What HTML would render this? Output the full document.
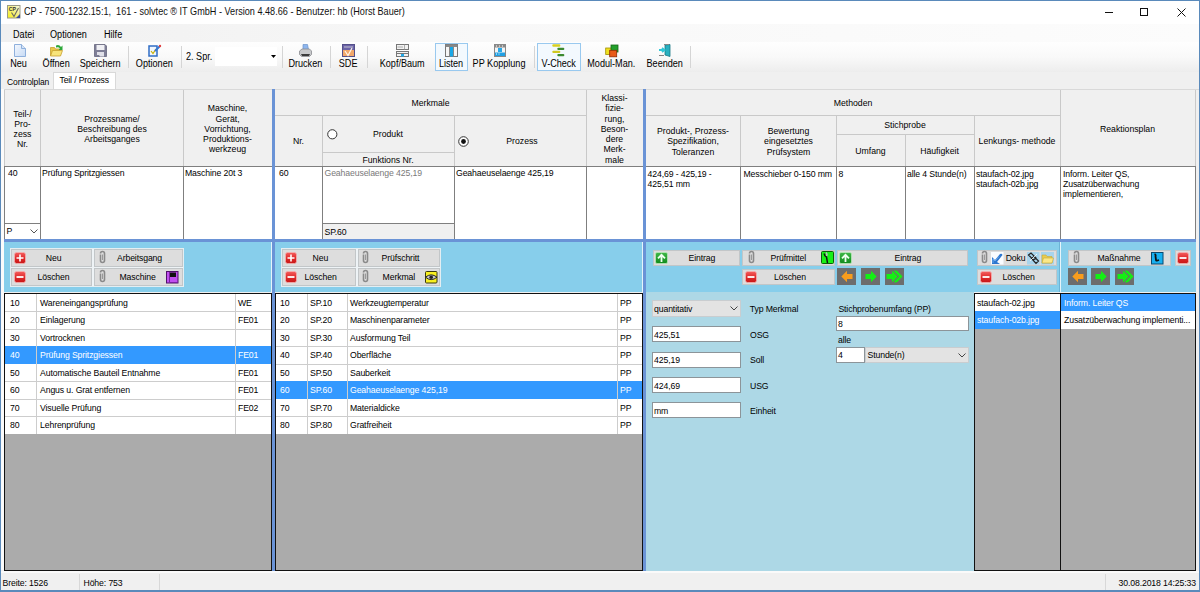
<!DOCTYPE html><html><head><meta charset="utf-8"><style>
html,body{margin:0;padding:0;width:1200px;height:592px;overflow:hidden;background:#f0f0f0}
.a{position:absolute;box-sizing:border-box}
.c{position:absolute;box-sizing:border-box;display:flex;align-items:center;justify-content:center;text-align:center;padding-top:2px;font-family:"Liberation Sans",sans-serif;white-space:nowrap}
.t{position:absolute;white-space:nowrap;letter-spacing:-0.12px;font-family:"Liberation Sans",sans-serif}
svg.a{overflow:visible}
</style></head><body>
<div class="a" style="left:0px;top:0px;width:1200px;height:592px;background:#f0f0f0"></div>
<div class="a" style="left:0px;top:0px;width:1200px;height:24px;background:#fff"></div>
<svg class="a" style="left:7px;top:5px" width="13.5" height="13.5" viewBox="0 0 13.5 13.5"><defs><linearGradient id="ai" x1="0" y1="1" x2="1" y2="0"><stop offset="0" stop-color="#f8f018"/><stop offset="0.6" stop-color="#f4f090"/><stop offset="1" stop-color="#fbfbe8"/></linearGradient></defs><rect x="0.5" y="0.5" width="12.5" height="12.5" fill="url(#ai)" stroke="#9a9a88"/><path d="M13 9 L13 13 L9 13 Z" fill="#3c4c98"/><text x="1.8" y="6.3" font-size="5.2" font-weight="bold" font-family="Liberation Sans" fill="#333">CP</text><path d="M4.5 7.5 L7 11.5 L11.5 3" stroke="#666" fill="none" stroke-width="1.1"/></svg>
<div class="t" style="left:24px;top:6.48px;font-size:10.2px;line-height:12.24px;color:#111;letter-spacing:0;transform:scaleX(0.895);transform-origin:0 50%">CP - 7500-1232.15:1,&nbsp; 161 - solvtec ® IT GmbH - Version 4.48.66 - Benutzer: hb (Horst Bauer)</div>
<div class="a" style="left:1105px;top:12px;width:8px;height:1px;background:#111"></div>
<div class="a" style="left:1140px;top:8px;width:8px;height:8px;border:1px solid #111;box-sizing:border-box"></div>
<svg class="a" style="left:1177px;top:8px" width="9" height="9" viewBox="0 0 9 9"><path d="M0.5 0.5 L8.5 8.5 M8.5 0.5 L0.5 8.5" stroke="#111" stroke-width="1"/></svg>
<div class="a" style="left:1px;top:24px;width:1198px;height:18px;background:linear-gradient(to right,#f0f0f0,#f8f8f8 40%,#fcfcfc)"></div>
<div class="t" style="left:13px;top:28.6px;font-size:10px;line-height:12.0px;color:#000;letter-spacing:0;transform:scaleX(0.91);transform-origin:0 50%">Datei</div>
<div class="t" style="left:50px;top:28.6px;font-size:10px;line-height:12.0px;color:#000;letter-spacing:0;transform:scaleX(0.91);transform-origin:0 50%">Optionen</div>
<div class="t" style="left:104px;top:28.6px;font-size:10px;line-height:12.0px;color:#000;letter-spacing:0;transform:scaleX(0.91);transform-origin:0 50%">Hilfe</div>
<div class="a" style="left:1px;top:42px;width:1198px;height:30px;background:linear-gradient(#fefefe,#f9f9f9 50%,#ededed)"></div>
<div class="a" style="left:435px;top:43px;width:33px;height:28px;border:1px solid #99c9ef;background:#f3f9fe;box-sizing:border-box"></div>
<div class="a" style="left:537px;top:43px;width:44px;height:28px;border:1px solid #99c9ef;background:#f3f9fe;box-sizing:border-box"></div>
<div class="t" style="left:-0.3000000000000007px;width:37.0px;text-align:center;top:57.74px;font-size:10.1px;line-height:12.12px;color:#000;letter-spacing:0;transform:scaleX(0.9);transform-origin:50% 50%">Neu</div>
<div class="t" style="left:31.700000000000003px;width:48.3px;text-align:center;top:57.74px;font-size:10.1px;line-height:12.12px;color:#000;letter-spacing:0;transform:scaleX(0.9);transform-origin:50% 50%">Öffnen</div>
<div class="t" style="left:69.7px;width:60.3px;text-align:center;top:57.74px;font-size:10.1px;line-height:12.12px;color:#000;letter-spacing:0;transform:scaleX(0.9);transform-origin:50% 50%">Speichern</div>
<div class="t" style="left:124.69999999999999px;width:58.60000000000002px;text-align:center;top:57.74px;font-size:10.1px;line-height:12.12px;color:#000;letter-spacing:0;transform:scaleX(0.9);transform-origin:50% 50%">Optionen</div>
<div class="t" style="left:278.3px;width:54.69999999999999px;text-align:center;top:57.74px;font-size:10.1px;line-height:12.12px;color:#000;letter-spacing:0;transform:scaleX(0.9);transform-origin:50% 50%">Drucken</div>
<div class="t" style="left:330.3px;width:36.30000000000001px;text-align:center;top:57.74px;font-size:10.1px;line-height:12.12px;color:#000;letter-spacing:0;transform:scaleX(0.9);transform-origin:50% 50%">SDE</div>
<div class="t" style="left:367.6px;width:68.39999999999998px;text-align:center;top:57.74px;font-size:10.1px;line-height:12.12px;color:#000;letter-spacing:0;transform:scaleX(0.9);transform-origin:50% 50%">Kopf/Baum</div>
<div class="t" style="left:429.2px;width:44.10000000000002px;text-align:center;top:57.74px;font-size:10.1px;line-height:12.12px;color:#000;letter-spacing:0;transform:scaleX(0.9);transform-origin:50% 50%">Listen</div>
<div class="t" style="left:462.4px;width:74.10000000000002px;text-align:center;top:57.74px;font-size:10.1px;line-height:12.12px;color:#000;letter-spacing:0;transform:scaleX(0.9);transform-origin:50% 50%">PP Kopplung</div>
<div class="t" style="left:530.7px;width:55.5px;text-align:center;top:57.74px;font-size:10.1px;line-height:12.12px;color:#000;letter-spacing:0;transform:scaleX(0.9);transform-origin:50% 50%">V-Check</div>
<div class="t" style="left:575.4px;width:72.60000000000002px;text-align:center;top:57.74px;font-size:10.1px;line-height:12.12px;color:#000;letter-spacing:0;transform:scaleX(0.9);transform-origin:50% 50%">Modul-Man.</div>
<div class="t" style="left:637.3px;width:55.5px;text-align:center;top:57.74px;font-size:10.1px;line-height:12.12px;color:#000;letter-spacing:0;transform:scaleX(0.9);transform-origin:50% 50%">Beenden</div>
<div class="a" style="left:128px;top:46px;width:1px;height:22px;background:#d5d5d5"></div>
<div class="a" style="left:181px;top:46px;width:1px;height:22px;background:#d5d5d5"></div>
<div class="a" style="left:282px;top:46px;width:1px;height:22px;background:#d5d5d5"></div>
<div class="a" style="left:330px;top:46px;width:1px;height:22px;background:#d5d5d5"></div>
<div class="a" style="left:367px;top:46px;width:1px;height:22px;background:#d5d5d5"></div>
<div class="a" style="left:534px;top:46px;width:1px;height:22px;background:#d5d5d5"></div>
<div class="a" style="left:690px;top:46px;width:1px;height:22px;background:#d5d5d5"></div>
<div class="t" style="left:185.5px;top:50.94px;font-size:10.1px;line-height:12.12px;color:#000;letter-spacing:0;transform:scaleX(0.9);transform-origin:0 50%">2. Spr.</div>
<div class="a" style="left:215px;top:47px;width:62px;height:19px;background:#fff"></div>
<svg class="a" style="left:271px;top:55px" width="5" height="4" viewBox="0 0 5 4"><path d="M0 0 L5 0 L2.5 3 Z" fill="#000"/></svg>
<svg class="a" style="left:14px;top:44px" width="12" height="13" viewBox="0 0 12 13"><defs><linearGradient id="gdoc" x1="0" y1="0" x2="1" y2="1"><stop offset="0" stop-color="#f4f8fe"/><stop offset="1" stop-color="#c6daf4"/></linearGradient></defs><path d="M0.5 0.5 H7.5 L11.5 4.5 V12.5 H0.5 Z" fill="url(#gdoc)" stroke="#8fb0dc"/><path d="M7.5 0.5 V4.5 H11.5" fill="#d6e4f6" stroke="#8fb0dc"/></svg>
<svg class="a" style="left:50px;top:44px" width="13" height="13" viewBox="0 0 13 13"><path d="M0.5 3.5 H4.5 L5.5 5 H10 V11.5 H0.5 Z" fill="#e8c848" stroke="#c8a030" stroke-width="0.8"/><path d="M2.5 6.5 H12.5 L10.5 12 H0.5 Z" fill="#f8e47a" stroke="#c8a030" stroke-width="0.8"/><path d="M6 1.5 Q9 0 11 3 L12.5 1.5 V6 H8.5 L10 4.5 Q8.5 2.5 6 3.5 Z" fill="#2ea83a"/></svg>
<svg class="a" style="left:94px;top:44px" width="13" height="13" viewBox="0 0 13 13"><path d="M0.5 0.5 H11 L12.5 2 V12.5 H0.5 Z" fill="#7e7e96" stroke="#66667e" stroke-width="0.8"/><rect x="2.5" y="1" width="8" height="5" fill="#f0f0f4"/><path d="M3 8 H10 V12.5 H6 L5 11 H3 Z" fill="#e0e0e8"/></svg>
<svg class="a" style="left:148px;top:44px" width="13" height="13" viewBox="0 0 13 13"><path d="M1 2 H9 V12 H1 Z" fill="#f0f6fe" stroke="#2f6dc6" stroke-width="1.5"/><path d="M3 7 L5 9.5 L8 5" stroke="#c8b000" stroke-width="1.2" fill="none"/><path d="M7 7 L11.5 2.5" stroke="#3a78d0" stroke-width="2"/><circle cx="12" cy="2" r="1.2" fill="#e04040"/></svg>
<svg class="a" style="left:299px;top:44px" width="13" height="13" viewBox="0 0 13 13"><path d="M4 0.5 H8.5 L9.5 5.5 H4 Z" fill="#8eb6ee" stroke="#6c94cc" stroke-width="0.7"/><path d="M0.5 7 L3 5 H10.5 L12.5 7 V10.5 L10.5 12.5 H2.5 L0.5 10.5 Z" fill="#c9cacc" stroke="#8a8c90" stroke-width="0.8"/><path d="M2 10 H11 L10 12 H3 Z" fill="#3c3c3c"/></svg>
<svg class="a" style="left:342px;top:44px" width="13" height="13" viewBox="0 0 13 13"><rect x="0.5" y="0.5" width="12" height="12" fill="#f2a86a" stroke="#54508a"/><rect x="1" y="1" width="11" height="5" fill="#6c64a8"/><path d="M2 3 H11" stroke="#ddd" stroke-width="0.8"/><path d="M3 7 L6 11.5 L10 4" stroke="#fff6e8" stroke-width="1.2" fill="none"/></svg>
<svg class="a" style="left:396px;top:44px" width="13" height="13" viewBox="0 0 13 13"><rect x="0.5" y="0.5" width="12" height="5" fill="#f2f2f2" stroke="#777"/><path d="M8.5 0.5 V5.5 M1.5 3 H7" stroke="#999" stroke-width="0.8"/><rect x="0.5" y="7.5" width="12" height="5" fill="#f2f2f2" stroke="#777"/><path d="M0.5 9.5 H12.5" stroke="#777" stroke-width="1"/><rect x="5" y="10" width="3" height="2.5" fill="#20a8e8"/></svg>
<svg class="a" style="left:445px;top:44px" width="13" height="13" viewBox="0 0 13 13"><rect x="0.5" y="0.5" width="12" height="12" fill="#f6f6f6" stroke="#777"/><rect x="0.5" y="0.5" width="12" height="2.5" fill="#888"/><path d="M4.5 0.5 V12.5 M8.5 0.5 V12.5" stroke="#888"/><rect x="5" y="3" width="3" height="9.5" fill="#18a8e8"/></svg>
<svg class="a" style="left:494px;top:44px" width="12" height="13" viewBox="0 0 12 13"><rect x="0.5" y="0.5" width="11" height="12" fill="#f4f4f4" stroke="#888"/><rect x="0.5" y="0.5" width="11" height="3" fill="#8a8a8a"/><path d="M2 2 H3 M5 2 H6 M8 2 H9" stroke="#fff"/><rect x="4" y="4" width="4" height="4" fill="#28a8e8"/><rect x="1" y="8.5" width="10" height="3.5" fill="#20a0e4"/><path d="M2 10 H3 M4.5 10 H5.5" stroke="#fff"/></svg>
<svg class="a" style="left:552px;top:44px" width="13" height="13" viewBox="0 0 13 13"><rect x="0.3" y="0.3" width="8" height="2.4" rx="1" fill="#d8d020"/><rect x="5.3" y="3.7" width="7" height="2.2" rx="1" fill="#3c8a30"/><rect x="0.3" y="6.7" width="8" height="2.2" rx="1" fill="#d0c820"/><rect x="5.3" y="10" width="7" height="2.2" rx="1" fill="#3c8a30"/></svg>
<svg class="a" style="left:605px;top:44px" width="14" height="13" viewBox="0 0 14 13"><rect x="0.7" y="4" width="6" height="6.5" fill="#f0e020" stroke="#a09000" stroke-width="0.8"/><rect x="6" y="1" width="7" height="7" fill="#22a02c" stroke="#186818" stroke-width="0.8"/><rect x="4.7" y="6.3" width="7" height="6.5" fill="#e85a18" stroke="#902800" stroke-width="0.8"/></svg>
<svg class="a" style="left:659px;top:44px" width="12" height="13" viewBox="0 0 12 13"><path d="M6 1 L11 0.5 V12.5 L6 11 Z" fill="#28b0c0" stroke="#1a7886" stroke-width="0.8"/><path d="M5 0.5 H10" stroke="#888"/><path d="M0 6 H5 M3 4 L5.5 6 L3 8" stroke="#30c8d8" stroke-width="1.8" fill="none"/><path d="M0 11.5 H5" stroke="#666" stroke-width="0.8"/></svg>
<div class="t" style="left:7px;top:76.7px;font-size:8.5px;line-height:10.2px;color:#000;">Controlplan</div>
<div class="a" style="left:53px;top:72px;width:63px;height:18px;background:#fff;border:1px solid #d9d9d9;border-bottom:none;box-sizing:border-box"></div>
<div class="t" style="left:59.5px;top:75.44px;font-size:8.6px;line-height:10.32px;color:#000;">Teil / Prozess</div>
<div class="a" style="left:1px;top:89px;width:1198px;height:1px;background:#d9d9d9"></div>
<div class="a" style="left:1px;top:89px;width:3px;height:481px;background:#fbfbfb"></div>
<div class="a" style="left:4px;top:90px;width:1192px;height:76px;background:#f0f0f0"></div>
<div class="a" style="left:4px;top:166px;width:1192px;height:73px;background:#fff"></div>
<div class="c" style="left:5px;top:90px;width:35px;height:76px;font-size:8.7px;line-height:10.2px;color:#000;">Teil-/<br>Pro-<br>zess<br>Nr.</div>
<div class="c" style="left:41px;top:90px;width:142px;height:76px;font-size:8.7px;line-height:10.2px;color:#000;">Prozessname/<br>Beschreibung des<br>Arbeitsganges</div>
<div class="c" style="left:184px;top:90px;width:87px;height:76px;font-size:8.7px;line-height:10.2px;color:#000;">Maschine,<br>Gerät,<br>Vorrichtung,<br>Produktions-<br>werkzeug</div>
<div class="a" style="left:4px;top:90px;width:1px;height:76px;background:#c9c9c9"></div>
<div class="a" style="left:4px;top:166px;width:1px;height:73px;background:#7f7f7f"></div>
<div class="a" style="left:40px;top:90px;width:1px;height:76px;background:#c9c9c9"></div>
<div class="a" style="left:40px;top:166px;width:1px;height:73px;background:#7f7f7f"></div>
<div class="a" style="left:183px;top:90px;width:1px;height:76px;background:#c9c9c9"></div>
<div class="a" style="left:183px;top:166px;width:1px;height:73px;background:#7f7f7f"></div>
<div class="a" style="left:4px;top:166px;width:268px;height:1px;background:#7f7f7f"></div>
<div class="t" style="left:8px;top:168.28px;font-size:8.7px;line-height:10.44px;color:#000;">40</div>
<div class="t" style="left:42px;top:168.28px;font-size:8.7px;line-height:10.44px;color:#000;">Prüfung Spritzgiessen</div>
<div class="t" style="left:185px;top:168.28px;font-size:8.7px;line-height:10.44px;color:#000;">Maschine 20t 3</div>
<div class="a" style="left:4px;top:223px;width:37px;height:1px;background:#7f7f7f"></div>
<div class="t" style="left:6.5px;top:225.78px;font-size:8.7px;line-height:10.44px;color:#000;">P</div>
<svg class="a" style="left:30px;top:229px" width="8" height="5" viewBox="0 0 8 5"><path d="M0.5 0.5 L4 4 L7.5 0.5" stroke="#555" fill="none"/></svg>
<div class="c" style="left:275px;top:90px;width:311px;height:25px;font-size:8.7px;line-height:10.2px;color:#000;">Merkmale</div>
<div class="a" style="left:275px;top:115px;width:311px;height:1px;background:#c9c9c9"></div>
<div class="c" style="left:275px;top:115px;width:47px;height:51px;font-size:8.7px;line-height:10.2px;color:#000;">Nr.</div>
<div class="a" style="left:322px;top:115px;width:1px;height:51px;background:#c9c9c9"></div>
<div class="c" style="left:322px;top:115px;width:132px;height:37px;font-size:8.7px;line-height:10.2px;color:#000;">Produkt</div>
<svg class="a" style="left:327px;top:129px" width="11" height="11" viewBox="0 0 11 11"><circle cx="5.3" cy="5.3" r="4.6" fill="#fff" stroke="#333" stroke-width="1"/></svg>
<div class="a" style="left:322px;top:152px;width:132px;height:1px;background:#c9c9c9"></div>
<div class="c" style="left:322px;top:152px;width:132px;height:14px;font-size:8.7px;line-height:10.2px;color:#000;">Funktions Nr.</div>
<div class="a" style="left:454px;top:115px;width:1px;height:51px;background:#c9c9c9"></div>
<svg class="a" style="left:458px;top:136px" width="12" height="12" viewBox="0 0 12 12"><circle cx="5.5" cy="5.5" r="4.8" fill="#fff" stroke="#333" stroke-width="1"/><circle cx="5.5" cy="5.5" r="2.4" fill="#111"/></svg>
<div class="c" style="left:462px;top:115px;width:120px;height:51px;font-size:8.7px;line-height:10.2px;color:#000;">Prozess</div>
<div class="a" style="left:586px;top:90px;width:1px;height:76px;background:#c9c9c9"></div>
<div class="c" style="left:586px;top:90px;width:57px;height:76px;font-size:8.7px;line-height:10.3px;color:#000;">Klassi-<br>fizie-<br>rung,<br>Beson-<br>dere<br>Merk-<br>male</div>
<div class="a" style="left:275px;top:166px;width:368px;height:1px;background:#7f7f7f"></div>
<div class="a" style="left:322px;top:166px;width:1px;height:73px;background:#7f7f7f"></div>
<div class="a" style="left:454px;top:166px;width:1px;height:73px;background:#7f7f7f"></div>
<div class="a" style="left:586px;top:166px;width:1px;height:73px;background:#7f7f7f"></div>
<div class="t" style="left:279px;top:168.28px;font-size:8.7px;line-height:10.44px;color:#000;">60</div>
<div class="t" style="left:324.5px;top:168.28px;font-size:8.7px;line-height:10.44px;color:#7a7a7a;">Geahaeuselaenge 425,19</div>
<div class="a" style="left:323px;top:224px;width:131px;height:15px;background:#f0f0f0"></div>
<div class="a" style="left:322px;top:223px;width:133px;height:1px;background:#7f7f7f"></div>
<div class="t" style="left:324.5px;top:226.78px;font-size:8.7px;line-height:10.44px;color:#000;">SP.60</div>
<div class="t" style="left:456px;top:168.28px;font-size:8.7px;line-height:10.44px;color:#000;">Geahaeuselaenge 425,19</div>
<div class="c" style="left:646px;top:90px;width:414px;height:25px;font-size:8.7px;line-height:10.2px;color:#000;">Methoden</div>
<div class="a" style="left:646px;top:115px;width:414px;height:1px;background:#c9c9c9"></div>
<div class="c" style="left:646px;top:115px;width:94px;height:51px;font-size:8.7px;line-height:10.2px;color:#000;">Produkt-, Prozess-<br>Spezifikation,<br>Toleranzen</div>
<div class="a" style="left:740px;top:115px;width:1px;height:51px;background:#c9c9c9"></div>
<div class="c" style="left:741px;top:115px;width:95px;height:51px;font-size:8.7px;line-height:10.2px;color:#000;">Bewertung<br>eingesetztes<br>Prüfsystem</div>
<div class="a" style="left:836px;top:115px;width:1px;height:51px;background:#c9c9c9"></div>
<div class="c" style="left:836px;top:115px;width:138px;height:19px;font-size:8.7px;line-height:10.2px;color:#000;">Stichprobe</div>
<div class="a" style="left:836px;top:134px;width:138px;height:1px;background:#c9c9c9"></div>
<div class="c" style="left:836px;top:134px;width:69px;height:32px;font-size:8.7px;line-height:10.2px;color:#000;">Umfang</div>
<div class="a" style="left:905px;top:134px;width:1px;height:32px;background:#c9c9c9"></div>
<div class="c" style="left:905px;top:134px;width:69px;height:32px;font-size:8.7px;line-height:10.2px;color:#000;">Häufigkeit</div>
<div class="a" style="left:974px;top:115px;width:1px;height:51px;background:#c9c9c9"></div>
<div class="c" style="left:974px;top:115px;width:86px;height:51px;font-size:8.7px;line-height:10.2px;color:#000;">Lenkungs- methode</div>
<div class="a" style="left:1060px;top:90px;width:1px;height:76px;background:#c9c9c9"></div>
<div class="c" style="left:1060px;top:90px;width:135px;height:76px;font-size:8.7px;line-height:10.2px;color:#000;">Reaktionsplan</div>
<div class="a" style="left:1195px;top:90px;width:1px;height:76px;background:#c9c9c9"></div>
<div class="a" style="left:646px;top:166px;width:550px;height:1px;background:#7f7f7f"></div>
<div class="a" style="left:740px;top:166px;width:1px;height:73px;background:#7f7f7f"></div>
<div class="a" style="left:836px;top:166px;width:1px;height:73px;background:#7f7f7f"></div>
<div class="a" style="left:905px;top:166px;width:1px;height:73px;background:#7f7f7f"></div>
<div class="a" style="left:974px;top:166px;width:1px;height:73px;background:#7f7f7f"></div>
<div class="a" style="left:1060px;top:166px;width:1px;height:73px;background:#7f7f7f"></div>
<div class="a" style="left:1195px;top:166px;width:1px;height:73px;background:#7f7f7f"></div>
<div class="t" style="left:647.5px;top:169px;font-size:8.7px;line-height:10px;color:#000;">424,69 - 425,19 -<br>425,51 mm</div>
<div class="t" style="left:743.5px;top:168.78px;font-size:8.7px;line-height:10.44px;color:#000;">Messchieber 0-150 mm</div>
<div class="t" style="left:838.5px;top:168.78px;font-size:8.7px;line-height:10.44px;color:#000;">8</div>
<div class="t" style="left:907px;top:168.78px;font-size:8.7px;line-height:10.44px;color:#000;">alle 4 Stunde(n)</div>
<div class="t" style="left:976px;top:169px;font-size:8.7px;line-height:10px;color:#000;">staufach-02.jpg<br>staufach-02b.jpg</div>
<div class="t" style="left:1063px;top:169px;font-size:8.7px;line-height:10px;color:#000;">Inform. Leiter QS,<br>Zusatzüberwachung<br>implementieren,</div>
<div class="a" style="left:4px;top:89px;width:1192px;height:1px;background:#d9d9d9"></div>
<div class="a" style="left:4px;top:242px;width:1192px;height:50px;background:#87ceeb"></div>
<div class="a" style="left:4px;top:239px;width:1192px;height:3px;background:#6a93d6"></div>
<div class="a" style="left:10px;top:248px;width:174px;height:39px;background:#eef3f6;border:1px solid #e4eef2"></div>
<div class="a" style="left:11px;top:249px;width:81px;height:18px;background:#dddddd;border:1px solid #c2c6c8;"></div>
<div class="a" style="left:11px;top:268px;width:81px;height:18px;background:#dddddd;border:1px solid #c2c6c8;"></div>
<div class="a" style="left:93.5px;top:249px;width:89.0px;height:18px;background:#dddddd;border:1px solid #c2c6c8;"></div>
<div class="a" style="left:93.5px;top:268px;width:89.0px;height:18px;background:#dddddd;border:1px solid #c2c6c8;"></div>
<svg class="a" style="left:14px;top:252px" width="12" height="12" viewBox="0 0 12 12"><defs><linearGradient id="rg" x1="0" y1="0" x2="0" y2="1"><stop offset="0" stop-color="#f46060"/><stop offset="0.5" stop-color="#e02a2a"/><stop offset="1" stop-color="#c81818"/></linearGradient></defs><rect x="0.5" y="0.5" width="11" height="11" rx="2" fill="url(#rg)" stroke="#f4b0b0" stroke-width="0.8"/><path d="M6 2.5 V9.5 M2.5 6 H9.5" stroke="#fff" stroke-width="1.6"/></svg>
<svg class="a" style="left:14px;top:271px" width="12" height="12" viewBox="0 0 12 12"><defs><linearGradient id="rg" x1="0" y1="0" x2="0" y2="1"><stop offset="0" stop-color="#f46060"/><stop offset="0.5" stop-color="#e02a2a"/><stop offset="1" stop-color="#c81818"/></linearGradient></defs><rect x="0.5" y="0.5" width="11" height="11" rx="2" fill="url(#rg)" stroke="#f4b0b0" stroke-width="0.8"/><path d="M2.5 6 H9.5" stroke="#fff" stroke-width="1.8"/></svg>
<div class="t" style="left:45.8px;top:253.08px;font-size:8.7px;line-height:10.44px;color:#000;">Neu</div>
<div class="t" style="left:37.5px;top:272.08px;font-size:8.7px;line-height:10.44px;color:#000;">Löschen</div>
<svg class="a" style="left:99px;top:251px" width="7" height="13" viewBox="0 0 7 13"><path d="M1.5 3.5 V9.5 A2 2 0 0 0 5.5 9.5 V2.5 A2 2 0 0 0 1.5 2.5" stroke="#8a8a8a" fill="none" stroke-width="1.6"/><path d="M3.5 3.5 V9" stroke="#9a9a9a" stroke-width="1"/></svg>
<svg class="a" style="left:99px;top:270px" width="7" height="13" viewBox="0 0 7 13"><path d="M1.5 3.5 V9.5 A2 2 0 0 0 5.5 9.5 V2.5 A2 2 0 0 0 1.5 2.5" stroke="#8a8a8a" fill="none" stroke-width="1.6"/><path d="M3.5 3.5 V9" stroke="#9a9a9a" stroke-width="1"/></svg>
<div class="t" style="left:117px;top:253.08px;font-size:8.7px;line-height:10.44px;color:#000;">Arbeitsgang</div>
<div class="t" style="left:119.4px;top:272.08px;font-size:8.7px;line-height:10.44px;color:#000;">Maschine</div>
<svg class="a" style="left:166px;top:270.5px" width="12.5" height="12.5" viewBox="0 0 12.5 12.5"><rect x="0.5" y="0.5" width="11.5" height="11.5" fill="#c050f0" stroke="#50106a"/><rect x="4" y="1.5" width="6" height="4.5" fill="#111"/><path d="M3.5 1 V11.5 H11.5" stroke="#7a20a0" stroke-width="1" fill="none"/></svg>
<div class="a" style="left:281px;top:248px;width:160px;height:39px;background:#eef3f6;border:1px solid #e4eef2"></div>
<div class="a" style="left:282px;top:249px;width:74px;height:18px;background:#dddddd;border:1px solid #c2c6c8;"></div>
<div class="a" style="left:282px;top:268px;width:74px;height:18px;background:#dddddd;border:1px solid #c2c6c8;"></div>
<div class="a" style="left:358px;top:249px;width:82px;height:18px;background:#dddddd;border:1px solid #c2c6c8;"></div>
<div class="a" style="left:358px;top:268px;width:82px;height:18px;background:#dddddd;border:1px solid #c2c6c8;"></div>
<svg class="a" style="left:285px;top:252px" width="12" height="12" viewBox="0 0 12 12"><defs><linearGradient id="rg" x1="0" y1="0" x2="0" y2="1"><stop offset="0" stop-color="#f46060"/><stop offset="0.5" stop-color="#e02a2a"/><stop offset="1" stop-color="#c81818"/></linearGradient></defs><rect x="0.5" y="0.5" width="11" height="11" rx="2" fill="url(#rg)" stroke="#f4b0b0" stroke-width="0.8"/><path d="M6 2.5 V9.5 M2.5 6 H9.5" stroke="#fff" stroke-width="1.6"/></svg>
<svg class="a" style="left:285px;top:271px" width="12" height="12" viewBox="0 0 12 12"><defs><linearGradient id="rg" x1="0" y1="0" x2="0" y2="1"><stop offset="0" stop-color="#f46060"/><stop offset="0.5" stop-color="#e02a2a"/><stop offset="1" stop-color="#c81818"/></linearGradient></defs><rect x="0.5" y="0.5" width="11" height="11" rx="2" fill="url(#rg)" stroke="#f4b0b0" stroke-width="0.8"/><path d="M2.5 6 H9.5" stroke="#fff" stroke-width="1.8"/></svg>
<div class="t" style="left:312.6px;top:253.08px;font-size:8.7px;line-height:10.44px;color:#000;">Neu</div>
<div class="t" style="left:304.6px;top:272.08px;font-size:8.7px;line-height:10.44px;color:#000;">Löschen</div>
<svg class="a" style="left:362px;top:251px" width="7" height="13" viewBox="0 0 7 13"><path d="M1.5 3.5 V9.5 A2 2 0 0 0 5.5 9.5 V2.5 A2 2 0 0 0 1.5 2.5" stroke="#8a8a8a" fill="none" stroke-width="1.6"/><path d="M3.5 3.5 V9" stroke="#9a9a9a" stroke-width="1"/></svg>
<svg class="a" style="left:362px;top:270px" width="7" height="13" viewBox="0 0 7 13"><path d="M1.5 3.5 V9.5 A2 2 0 0 0 5.5 9.5 V2.5 A2 2 0 0 0 1.5 2.5" stroke="#8a8a8a" fill="none" stroke-width="1.6"/><path d="M3.5 3.5 V9" stroke="#9a9a9a" stroke-width="1"/></svg>
<div class="t" style="left:381.5px;top:253.08px;font-size:8.7px;line-height:10.44px;color:#000;">Prüfschritt</div>
<div class="t" style="left:382.6px;top:272.08px;font-size:8.7px;line-height:10.44px;color:#000;">Merkmal</div>
<svg class="a" style="left:424.5px;top:270.5px" width="12.5" height="12.5" viewBox="0 0 12.5 12.5"><rect x="0.5" y="0.5" width="11.5" height="11.5" rx="1" fill="#f8f020" stroke="#3a3a10"/><path d="M0.5 6.2 Q6.2 1.5 12 6.2 Q6.2 11 0.5 6.2 Z" fill="#c8c8c8" stroke="#222" stroke-width="1"/><circle cx="6.2" cy="6.2" r="1.8" fill="#222"/></svg>
<div class="a" style="left:653px;top:250px;width:87px;height:16px;background:#dddddd;border:1px solid #c2c6c8;"></div>
<svg class="a" style="left:655px;top:252px" width="13" height="12" viewBox="0 0 13 12"><defs><linearGradient id="gg" x1="0" y1="0" x2="0" y2="1"><stop offset="0" stop-color="#40b848"/><stop offset="1" stop-color="#108a1c"/></linearGradient></defs><rect x="0.5" y="0.5" width="12" height="11" rx="1.5" fill="url(#gg)" stroke="#b8e8b8" stroke-width="0.8"/><path d="M6.5 10 V3 M3 6.3 L6.5 2.8 L10 6.3" stroke="#f0fff0" stroke-width="1.8" fill="none"/></svg>
<div class="t" style="left:688.5px;top:253.08px;font-size:8.7px;line-height:10.44px;color:#000;">Eintrag</div>
<div class="a" style="left:741.5px;top:250px;width:93.5px;height:16px;background:#dddddd;border:1px solid #c2c6c8;"></div>
<div class="a" style="left:741.5px;top:269px;width:93.5px;height:16px;background:#dddddd;border:1px solid #c2c6c8;"></div>
<svg class="a" style="left:748px;top:251px" width="7" height="13" viewBox="0 0 7 13"><path d="M1.5 3.5 V9.5 A2 2 0 0 0 5.5 9.5 V2.5 A2 2 0 0 0 1.5 2.5" stroke="#8a8a8a" fill="none" stroke-width="1.6"/><path d="M3.5 3.5 V9" stroke="#9a9a9a" stroke-width="1"/></svg>
<div class="t" style="left:770.5px;top:253.08px;font-size:8.7px;line-height:10.44px;color:#000;">Prüfmittel</div>
<svg class="a" style="left:820.5px;top:251px" width="13" height="13" viewBox="0 0 13 13"><rect x="0.5" y="0.5" width="12" height="12" rx="1" fill="#18f018" stroke="#0a600a"/><path d="M3.5 2.5 Q3 5 5.5 6 L6.5 12" stroke="#111" stroke-width="1.5" fill="none"/><path d="M5 1.5 Q6.5 3 5.5 5" stroke="#bbb" stroke-width="1.5" fill="none"/></svg>
<svg class="a" style="left:745px;top:271px" width="12" height="12" viewBox="0 0 12 12"><defs><linearGradient id="rg" x1="0" y1="0" x2="0" y2="1"><stop offset="0" stop-color="#f46060"/><stop offset="0.5" stop-color="#e02a2a"/><stop offset="1" stop-color="#c81818"/></linearGradient></defs><rect x="0.5" y="0.5" width="11" height="11" rx="2" fill="url(#rg)" stroke="#f4b0b0" stroke-width="0.8"/><path d="M2.5 6 H9.5" stroke="#fff" stroke-width="1.8"/></svg>
<div class="t" style="left:774px;top:272.08px;font-size:8.7px;line-height:10.44px;color:#000;">Löschen</div>
<div class="a" style="left:837px;top:250px;width:131px;height:16px;background:#dddddd;border:1px solid #c2c6c8;"></div>
<svg class="a" style="left:839px;top:252px" width="13" height="12" viewBox="0 0 13 12"><defs><linearGradient id="gg" x1="0" y1="0" x2="0" y2="1"><stop offset="0" stop-color="#40b848"/><stop offset="1" stop-color="#108a1c"/></linearGradient></defs><rect x="0.5" y="0.5" width="12" height="11" rx="1.5" fill="url(#gg)" stroke="#b8e8b8" stroke-width="0.8"/><path d="M6.5 10 V3 M3 6.3 L6.5 2.8 L10 6.3" stroke="#f0fff0" stroke-width="1.8" fill="none"/></svg>
<div class="t" style="left:894.5px;top:253.08px;font-size:8.7px;line-height:10.44px;color:#000;">Eintrag</div>
<div class="a" style="left:837px;top:268px;width:19px;height:17px;background:#6d6d6d"></div>
<svg class="a" style="left:841px;top:269.5px" width="12" height="13" viewBox="0 0 12 13"><path d="M0.3 6.5 L6 0.8 V4 H11.5 V9 H6 V12.2 Z" fill="#f99d1c"/></svg>
<div class="a" style="left:861px;top:268px;width:19px;height:17px;background:#6d6d6d"></div>
<svg class="a" style="left:864.5px;top:269.5px" width="12" height="13" viewBox="0 0 12 13"><path d="M11.7 6.5 L6 0.8 V4 H0.5 V9 H6 V12.2 Z" fill="#14f014"/></svg>
<div class="a" style="left:884.5px;top:268px;width:19px;height:17px;background:#6d6d6d"></div>
<svg class="a" style="left:886.0px;top:269.5px" width="16" height="13" viewBox="0 0 16 13"><path d="M11.7 6.5 L6 0.8 V4 H0.5 V9 H6 V12.2 Z" fill="#14f014"/><path d="M9 0.8 L15 6.5 L9 12.2 H11 L16.5 6.5 L11 0.8 Z" fill="#14f014"/><path d="M8.5 0.8 L14.3 6.5 L8.5 12.2" stroke="#14f014" stroke-width="1.6" fill="none"/></svg>
<div class="a" style="left:976.5px;top:250px;width:80.0px;height:16px;background:#dddddd;border:1px solid #c2c6c8;"></div>
<div class="a" style="left:976.5px;top:269px;width:80.0px;height:16px;background:#dddddd;border:1px solid #c2c6c8;"></div>
<svg class="a" style="left:981px;top:251px" width="7" height="13" viewBox="0 0 7 13"><path d="M1.5 3.5 V9.5 A2 2 0 0 0 5.5 9.5 V2.5 A2 2 0 0 0 1.5 2.5" stroke="#8a8a8a" fill="none" stroke-width="1.6"/><path d="M3.5 3.5 V9" stroke="#9a9a9a" stroke-width="1"/></svg>
<svg class="a" style="left:990.5px;top:251.5px" width="12.5" height="12.5" viewBox="0 0 12.5 12.5"><rect x="0" y="0" width="12.5" height="12.5" fill="#fafcff"/><path d="M1 12 L1 5 L4 8 L9 2 Q11 1 11.5 3 L6 10 L9 12 Z" fill="#2e78d0"/><path d="M2 11 L2 7 L4 9 L8 4.5" stroke="#7ab4f0" stroke-width="0.8" fill="none"/></svg>
<div class="t" style="left:1005.7px;top:253.08px;font-size:8.7px;line-height:10.44px;color:#000;">Doku</div>
<svg class="a" style="left:1027px;top:251.5px" width="12.5" height="12.5" viewBox="0 0 12.5 12.5"><rect x="0" y="0" width="12.5" height="12.5" fill="#a8d4ec"/><path d="M1.5 3 L4 1 L9 6 L6.5 8 Z M4.5 6.5 L7 4.5 L11.5 9 L9 11.5 Z" fill="none" stroke="#222" stroke-width="1.2"/><path d="M3 9 L10 2" stroke="#fff" stroke-width="0.8"/></svg>
<svg class="a" style="left:1041px;top:251.5px" width="13" height="12.5" viewBox="0 0 13 12.5"><rect x="0" y="0" width="13" height="12.5" fill="#a8d4ec"/><path d="M1 3 H5 L6 4.5 H11 V11 H1 Z" fill="#e8cc50" stroke="#c8a838" stroke-width="0.6"/><path d="M2.5 6 H12.5 L11 11 H1 Z" fill="#fbe888" stroke="#c8a838" stroke-width="0.6"/></svg>
<svg class="a" style="left:980px;top:271px" width="12" height="12" viewBox="0 0 12 12"><defs><linearGradient id="rg" x1="0" y1="0" x2="0" y2="1"><stop offset="0" stop-color="#f46060"/><stop offset="0.5" stop-color="#e02a2a"/><stop offset="1" stop-color="#c81818"/></linearGradient></defs><rect x="0.5" y="0.5" width="11" height="11" rx="2" fill="url(#rg)" stroke="#f4b0b0" stroke-width="0.8"/><path d="M2.5 6 H9.5" stroke="#fff" stroke-width="1.8"/></svg>
<div class="t" style="left:1002.6px;top:272.08px;font-size:8.7px;line-height:10.44px;color:#000;">Löschen</div>
<div class="a" style="left:1059px;top:242px;width:1px;height:50px;background:#6cb4d6"></div>
<div class="a" style="left:271px;top:242px;width:1px;height:50px;background:#e6f4fa"></div>
<div class="a" style="left:642px;top:242px;width:1px;height:50px;background:#e6f4fa"></div>
<div class="a" style="left:1060px;top:242px;width:1px;height:50px;background:#e6f4fa"></div>
<div class="a" style="left:1068px;top:250px;width:102.5px;height:16px;background:#dddddd;border:1px solid #c2c6c8;"></div>
<svg class="a" style="left:1073px;top:251px" width="7" height="13" viewBox="0 0 7 13"><path d="M1.5 3.5 V9.5 A2 2 0 0 0 5.5 9.5 V2.5 A2 2 0 0 0 1.5 2.5" stroke="#8a8a8a" fill="none" stroke-width="1.6"/><path d="M3.5 3.5 V9" stroke="#9a9a9a" stroke-width="1"/></svg>
<div class="t" style="left:1097.5px;top:253.08px;font-size:8.7px;line-height:10.44px;color:#000;">Maßnahme</div>
<svg class="a" style="left:1151px;top:251.5px" width="12.5" height="12.5" viewBox="0 0 12.5 12.5"><rect x="0.5" y="0.5" width="11.5" height="11.5" fill="#18b0f0" stroke="#0a4a70"/><path d="M3.5 2 Q5 2.5 4.5 4 L5 8 Q5 9 6.5 8.5 L8 8" stroke="#111" stroke-width="1.8" fill="none"/></svg>
<div class="a" style="left:1174.5px;top:250px;width:16.0px;height:16px;background:#dddddd;border:1px solid #c2c6c8;"></div>
<svg class="a" style="left:1176.5px;top:251.8px" width="12" height="12" viewBox="0 0 12 12"><defs><linearGradient id="rg" x1="0" y1="0" x2="0" y2="1"><stop offset="0" stop-color="#f46060"/><stop offset="0.5" stop-color="#e02a2a"/><stop offset="1" stop-color="#c81818"/></linearGradient></defs><rect x="0.5" y="0.5" width="11" height="11" rx="2" fill="url(#rg)" stroke="#f4b0b0" stroke-width="0.8"/><path d="M2.5 6 H9.5" stroke="#fff" stroke-width="1.8"/></svg>
<div class="a" style="left:1067.5px;top:268px;width:19px;height:17px;background:#6d6d6d"></div>
<svg class="a" style="left:1071.5px;top:269.5px" width="12" height="13" viewBox="0 0 12 13"><path d="M0.3 6.5 L6 0.8 V4 H11.5 V9 H6 V12.2 Z" fill="#f99d1c"/></svg>
<div class="a" style="left:1091px;top:268px;width:19px;height:17px;background:#6d6d6d"></div>
<svg class="a" style="left:1094.5px;top:269.5px" width="12" height="13" viewBox="0 0 12 13"><path d="M11.7 6.5 L6 0.8 V4 H0.5 V9 H6 V12.2 Z" fill="#14f014"/></svg>
<div class="a" style="left:1115px;top:268px;width:19px;height:17px;background:#6d6d6d"></div>
<svg class="a" style="left:1116.5px;top:269.5px" width="16" height="13" viewBox="0 0 16 13"><path d="M11.7 6.5 L6 0.8 V4 H0.5 V9 H6 V12.2 Z" fill="#14f014"/><path d="M9 0.8 L15 6.5 L9 12.2 H11 L16.5 6.5 L11 0.8 Z" fill="#14f014"/><path d="M8.5 0.8 L14.3 6.5 L8.5 12.2" stroke="#14f014" stroke-width="1.6" fill="none"/></svg>
<div class="a" style="left:4px;top:293px;width:268px;height:278px;background:#ababab;border:1px solid #111"></div>
<div class="a" style="left:5px;top:294px;width:266px;height:17px;background:#fff"></div>
<div class="t" style="left:10px;top:297.58px;font-size:8.7px;line-height:10.44px;color:#000;">10</div>
<div class="t" style="left:40px;top:297.58px;font-size:8.7px;line-height:10.44px;color:#000;">Wareneingangsprüfung</div>
<div class="t" style="left:238px;top:297.58px;font-size:8.7px;line-height:10.44px;color:#000;">WE</div>
<div class="a" style="left:5px;top:311px;width:266px;height:18px;background:#fff"></div>
<div class="t" style="left:10px;top:315.08px;font-size:8.7px;line-height:10.44px;color:#000;">20</div>
<div class="t" style="left:40px;top:315.08px;font-size:8.7px;line-height:10.44px;color:#000;">Einlagerung</div>
<div class="t" style="left:238px;top:315.08px;font-size:8.7px;line-height:10.44px;color:#000;">FE01</div>
<div class="a" style="left:5px;top:329px;width:266px;height:17px;background:#fff"></div>
<div class="t" style="left:10px;top:332.58px;font-size:8.7px;line-height:10.44px;color:#000;">30</div>
<div class="t" style="left:40px;top:332.58px;font-size:8.7px;line-height:10.44px;color:#000;">Vortrocknen</div>
<div class="t" style="left:238px;top:332.58px;font-size:8.7px;line-height:10.44px;color:#000;"></div>
<div class="a" style="left:5px;top:346px;width:266px;height:18px;background:#3399ff"></div>
<div class="t" style="left:10px;top:350.08px;font-size:8.7px;line-height:10.44px;color:#fff;">40</div>
<div class="t" style="left:40px;top:350.08px;font-size:8.7px;line-height:10.44px;color:#fff;">Prüfung Spritzgiessen</div>
<div class="t" style="left:238px;top:350.08px;font-size:8.7px;line-height:10.44px;color:#fff;">FE01</div>
<div class="a" style="left:5px;top:364px;width:266px;height:17px;background:#fff"></div>
<div class="t" style="left:10px;top:367.58px;font-size:8.7px;line-height:10.44px;color:#000;">50</div>
<div class="t" style="left:40px;top:367.58px;font-size:8.7px;line-height:10.44px;color:#000;">Automatische Bauteil Entnahme</div>
<div class="t" style="left:238px;top:367.58px;font-size:8.7px;line-height:10.44px;color:#000;">FE01</div>
<div class="a" style="left:5px;top:381px;width:266px;height:18px;background:#fff"></div>
<div class="t" style="left:10px;top:385.08px;font-size:8.7px;line-height:10.44px;color:#000;">60</div>
<div class="t" style="left:40px;top:385.08px;font-size:8.7px;line-height:10.44px;color:#000;">Angus u. Grat entfernen</div>
<div class="t" style="left:238px;top:385.08px;font-size:8.7px;line-height:10.44px;color:#000;">FE01</div>
<div class="a" style="left:5px;top:399px;width:266px;height:17px;background:#fff"></div>
<div class="t" style="left:10px;top:402.58px;font-size:8.7px;line-height:10.44px;color:#000;">70</div>
<div class="t" style="left:40px;top:402.58px;font-size:8.7px;line-height:10.44px;color:#000;">Visuelle Prüfung</div>
<div class="t" style="left:238px;top:402.58px;font-size:8.7px;line-height:10.44px;color:#000;">FE02</div>
<div class="a" style="left:5px;top:416px;width:266px;height:18px;background:#fff"></div>
<div class="t" style="left:10px;top:420.08px;font-size:8.7px;line-height:10.44px;color:#000;">80</div>
<div class="t" style="left:40px;top:420.08px;font-size:8.7px;line-height:10.44px;color:#000;">Lehrenprüfung</div>
<div class="t" style="left:238px;top:420.08px;font-size:8.7px;line-height:10.44px;color:#000;"></div>
<div class="a" style="left:5px;top:311px;width:266px;height:1px;background:#cdcdcd"></div>
<div class="a" style="left:5px;top:329px;width:266px;height:1px;background:#cdcdcd"></div>
<div class="a" style="left:5px;top:381px;width:266px;height:1px;background:#cdcdcd"></div>
<div class="a" style="left:5px;top:399px;width:266px;height:1px;background:#cdcdcd"></div>
<div class="a" style="left:5px;top:416px;width:266px;height:1px;background:#cdcdcd"></div>
<div class="a" style="left:36px;top:294px;width:1px;height:140px;background:#cdcdcd"></div>
<div class="a" style="left:235px;top:294px;width:1px;height:140px;background:#cdcdcd"></div>
<div class="a" style="left:275px;top:293px;width:368px;height:278px;background:#ababab;border:1px solid #111"></div>
<div class="a" style="left:276px;top:294px;width:366px;height:17px;background:#fff"></div>
<div class="t" style="left:280px;top:297.58px;font-size:8.7px;line-height:10.44px;color:#000;">10</div>
<div class="t" style="left:310px;top:297.58px;font-size:8.7px;line-height:10.44px;color:#000;">SP.10</div>
<div class="t" style="left:350px;top:297.58px;font-size:8.7px;line-height:10.44px;color:#000;">Werkzeugtemperatur</div>
<div class="t" style="left:620px;top:297.58px;font-size:8.7px;line-height:10.44px;color:#000;">PP</div>
<div class="a" style="left:276px;top:311px;width:366px;height:18px;background:#fff"></div>
<div class="t" style="left:280px;top:315.08px;font-size:8.7px;line-height:10.44px;color:#000;">20</div>
<div class="t" style="left:310px;top:315.08px;font-size:8.7px;line-height:10.44px;color:#000;">SP.20</div>
<div class="t" style="left:350px;top:315.08px;font-size:8.7px;line-height:10.44px;color:#000;">Maschinenparameter</div>
<div class="t" style="left:620px;top:315.08px;font-size:8.7px;line-height:10.44px;color:#000;">PP</div>
<div class="a" style="left:276px;top:329px;width:366px;height:17px;background:#fff"></div>
<div class="t" style="left:280px;top:332.58px;font-size:8.7px;line-height:10.44px;color:#000;">30</div>
<div class="t" style="left:310px;top:332.58px;font-size:8.7px;line-height:10.44px;color:#000;">SP.30</div>
<div class="t" style="left:350px;top:332.58px;font-size:8.7px;line-height:10.44px;color:#000;">Ausformung Teil</div>
<div class="t" style="left:620px;top:332.58px;font-size:8.7px;line-height:10.44px;color:#000;">PP</div>
<div class="a" style="left:276px;top:346px;width:366px;height:18px;background:#fff"></div>
<div class="t" style="left:280px;top:350.08px;font-size:8.7px;line-height:10.44px;color:#000;">40</div>
<div class="t" style="left:310px;top:350.08px;font-size:8.7px;line-height:10.44px;color:#000;">SP.40</div>
<div class="t" style="left:350px;top:350.08px;font-size:8.7px;line-height:10.44px;color:#000;">Oberfläche</div>
<div class="t" style="left:620px;top:350.08px;font-size:8.7px;line-height:10.44px;color:#000;">PP</div>
<div class="a" style="left:276px;top:364px;width:366px;height:17px;background:#fff"></div>
<div class="t" style="left:280px;top:367.58px;font-size:8.7px;line-height:10.44px;color:#000;">50</div>
<div class="t" style="left:310px;top:367.58px;font-size:8.7px;line-height:10.44px;color:#000;">SP.50</div>
<div class="t" style="left:350px;top:367.58px;font-size:8.7px;line-height:10.44px;color:#000;">Sauberkeit</div>
<div class="t" style="left:620px;top:367.58px;font-size:8.7px;line-height:10.44px;color:#000;">PP</div>
<div class="a" style="left:276px;top:381px;width:366px;height:18px;background:#3399ff"></div>
<div class="t" style="left:280px;top:385.08px;font-size:8.7px;line-height:10.44px;color:#fff;">60</div>
<div class="t" style="left:310px;top:385.08px;font-size:8.7px;line-height:10.44px;color:#fff;">SP.60</div>
<div class="t" style="left:350px;top:385.08px;font-size:8.7px;line-height:10.44px;color:#fff;">Geahaeuselaenge 425,19</div>
<div class="t" style="left:620px;top:385.08px;font-size:8.7px;line-height:10.44px;color:#fff;">PP</div>
<div class="a" style="left:276px;top:399px;width:366px;height:17px;background:#fff"></div>
<div class="t" style="left:280px;top:402.58px;font-size:8.7px;line-height:10.44px;color:#000;">70</div>
<div class="t" style="left:310px;top:402.58px;font-size:8.7px;line-height:10.44px;color:#000;">SP.70</div>
<div class="t" style="left:350px;top:402.58px;font-size:8.7px;line-height:10.44px;color:#000;">Materialdicke</div>
<div class="t" style="left:620px;top:402.58px;font-size:8.7px;line-height:10.44px;color:#000;">PP</div>
<div class="a" style="left:276px;top:416px;width:366px;height:18px;background:#fff"></div>
<div class="t" style="left:280px;top:420.08px;font-size:8.7px;line-height:10.44px;color:#000;">80</div>
<div class="t" style="left:310px;top:420.08px;font-size:8.7px;line-height:10.44px;color:#000;">SP.80</div>
<div class="t" style="left:350px;top:420.08px;font-size:8.7px;line-height:10.44px;color:#000;">Gratfreiheit</div>
<div class="t" style="left:620px;top:420.08px;font-size:8.7px;line-height:10.44px;color:#000;">PP</div>
<div class="a" style="left:276px;top:311px;width:366px;height:1px;background:#cdcdcd"></div>
<div class="a" style="left:276px;top:329px;width:366px;height:1px;background:#cdcdcd"></div>
<div class="a" style="left:276px;top:346px;width:366px;height:1px;background:#cdcdcd"></div>
<div class="a" style="left:276px;top:364px;width:366px;height:1px;background:#cdcdcd"></div>
<div class="a" style="left:276px;top:416px;width:366px;height:1px;background:#cdcdcd"></div>
<div class="a" style="left:307px;top:294px;width:1px;height:140px;background:#cdcdcd"></div>
<div class="a" style="left:346.5px;top:294px;width:1px;height:140px;background:#cdcdcd"></div>
<div class="a" style="left:617px;top:294px;width:1px;height:140px;background:#cdcdcd"></div>
<div class="a" style="left:646px;top:292px;width:328px;height:279px;background:#add8e6"></div>
<div class="a" style="left:974px;top:293px;width:86.5px;height:278px;background:#ababab;border:1px solid #111"></div>
<div class="a" style="left:975px;top:294px;width:84.5px;height:17px;background:#fff"></div>
<div class="t" style="left:977px;top:297.58px;font-size:8.7px;line-height:10.44px;color:#000;">staufach-02.jpg</div>
<div class="a" style="left:975px;top:311px;width:84.5px;height:18px;background:#3399ff"></div>
<div class="t" style="left:977px;top:315.08px;font-size:8.7px;line-height:10.44px;color:#fff;">staufach-02b.jpg</div>
<div class="a" style="left:1060px;top:293px;width:136px;height:278px;background:#ababab;border:1px solid #111"></div>
<div class="a" style="left:1061px;top:294px;width:134px;height:17px;background:#3399ff"></div>
<div class="t" style="left:1064px;top:297.58px;font-size:8.7px;line-height:10.44px;color:#fff;">Inform. Leiter QS</div>
<div class="a" style="left:1061px;top:311px;width:134px;height:18px;background:#fff"></div>
<div class="t" style="left:1064px;top:315.08px;font-size:8.7px;line-height:10.44px;color:#000;">Zusatzüberwachung implementi...</div>
<div class="a" style="left:651.5px;top:300px;width:89.0px;height:16.5px;background:#e3e3e3;border:1px solid #c9cdd0"></div>
<div class="t" style="left:654.0px;top:303.83px;font-size:8.7px;line-height:10.44px;color:#000;">quantitativ</div>
<svg class="a" style="left:729.5px;top:306.25px" width="8" height="5" viewBox="0 0 8 5"><path d="M0.5 0.5 L4 4 L7.5 0.5" stroke="#444" fill="none"/></svg>
<div class="t" style="left:749.8px;top:303.78px;font-size:8.7px;line-height:10.44px;color:#000;">Typ Merkmal</div>
<div class="a" style="left:651.5px;top:326px;width:89.0px;height:16px;background:#fff;border:1px solid #8c9499;"></div>
<div class="t" style="left:654.0px;top:329.58px;font-size:8.7px;line-height:10.44px;color:#000;">425,51</div>
<div class="t" style="left:750px;top:330.08px;font-size:8.7px;line-height:10.44px;color:#000;">OSG</div>
<div class="a" style="left:651.5px;top:351.5px;width:89.0px;height:16.0px;background:#fff;border:1px solid #8c9499;"></div>
<div class="t" style="left:654.0px;top:355.08px;font-size:8.7px;line-height:10.44px;color:#000;">425,19</div>
<div class="t" style="left:750px;top:355.48px;font-size:8.7px;line-height:10.44px;color:#000;">Soll</div>
<div class="a" style="left:651.5px;top:377px;width:89.0px;height:16px;background:#fff;border:1px solid #8c9499;"></div>
<div class="t" style="left:654.0px;top:380.58px;font-size:8.7px;line-height:10.44px;color:#000;">424,69</div>
<div class="t" style="left:750px;top:380.78px;font-size:8.7px;line-height:10.44px;color:#000;">USG</div>
<div class="a" style="left:651.5px;top:402px;width:89.0px;height:16px;background:#fff;border:1px solid #8c9499;"></div>
<div class="t" style="left:654.0px;top:405.58px;font-size:8.7px;line-height:10.44px;color:#000;">mm</div>
<div class="t" style="left:750px;top:406.08px;font-size:8.7px;line-height:10.44px;color:#000;">Einheit</div>
<div class="t" style="left:838.4px;top:303.78px;font-size:8.7px;line-height:10.44px;color:#000;">Stichprobenumfang (PP)</div>
<div class="a" style="left:835.5px;top:315.5px;width:133.0px;height:15.5px;background:#fff;border:1px solid #8c9499;"></div>
<div class="t" style="left:838.0px;top:318.83px;font-size:8.7px;line-height:10.44px;color:#000;">8</div>
<div class="t" style="left:838px;top:335.18px;font-size:8.7px;line-height:10.44px;color:#000;">alle</div>
<div class="a" style="left:835.5px;top:346.5px;width:29.0px;height:16.0px;background:#fff;border:1px solid #8c9499;"></div>
<div class="t" style="left:838.0px;top:350.08px;font-size:8.7px;line-height:10.44px;color:#000;">4</div>
<div class="a" style="left:865px;top:346.5px;width:103.5px;height:16.0px;background:#e3e3e3;border:1px solid #c9cdd0"></div>
<div class="t" style="left:867.5px;top:350.08px;font-size:8.7px;line-height:10.44px;color:#000;">Stunde(n)</div>
<svg class="a" style="left:957.5px;top:352.5px" width="8" height="5" viewBox="0 0 8 5"><path d="M0.5 0.5 L4 4 L7.5 0.5" stroke="#444" fill="none"/></svg>
<div class="a" style="left:1px;top:571px;width:1198px;height:2px;background:#fafafa"></div>
<div class="a" style="left:1px;top:573px;width:1198px;height:18px;background:#f0f0f0"></div>
<div class="t" style="left:2.5px;top:577.78px;font-size:8.7px;line-height:10.44px;color:#000;">Breite: 1526</div>
<div class="a" style="left:79px;top:574px;width:1px;height:16px;background:#d8d8d8"></div>
<div class="t" style="left:83.5px;top:577.78px;font-size:8.7px;line-height:10.44px;color:#000;">Höhe: 753</div>
<div class="a" style="left:159px;top:574px;width:1px;height:16px;background:#d8d8d8"></div>
<div class="a" style="left:1105px;top:574px;width:1px;height:16px;background:#d8d8d8"></div>
<div class="t" style="left:1118.5px;top:577.78px;font-size:8.7px;line-height:10.44px;color:#000;">30.08.2018 14:25:33</div>
<div class="a" style="left:0px;top:590px;width:1200px;height:2px;background:#5a8abb"></div>
<div class="a" style="left:272px;top:89px;width:3px;height:482px;background:#6a93d6"></div>
<div class="a" style="left:643px;top:89px;width:3px;height:482px;background:#6a93d6"></div>
<div class="a" style="left:0px;top:0px;width:1200px;height:1px;background:#5a8abb"></div>
<div class="a" style="left:0px;top:0px;width:1px;height:592px;background:#5a8abb"></div>
<div class="a" style="left:1199px;top:0px;width:1px;height:592px;background:#5a8abb"></div>
</body></html>
